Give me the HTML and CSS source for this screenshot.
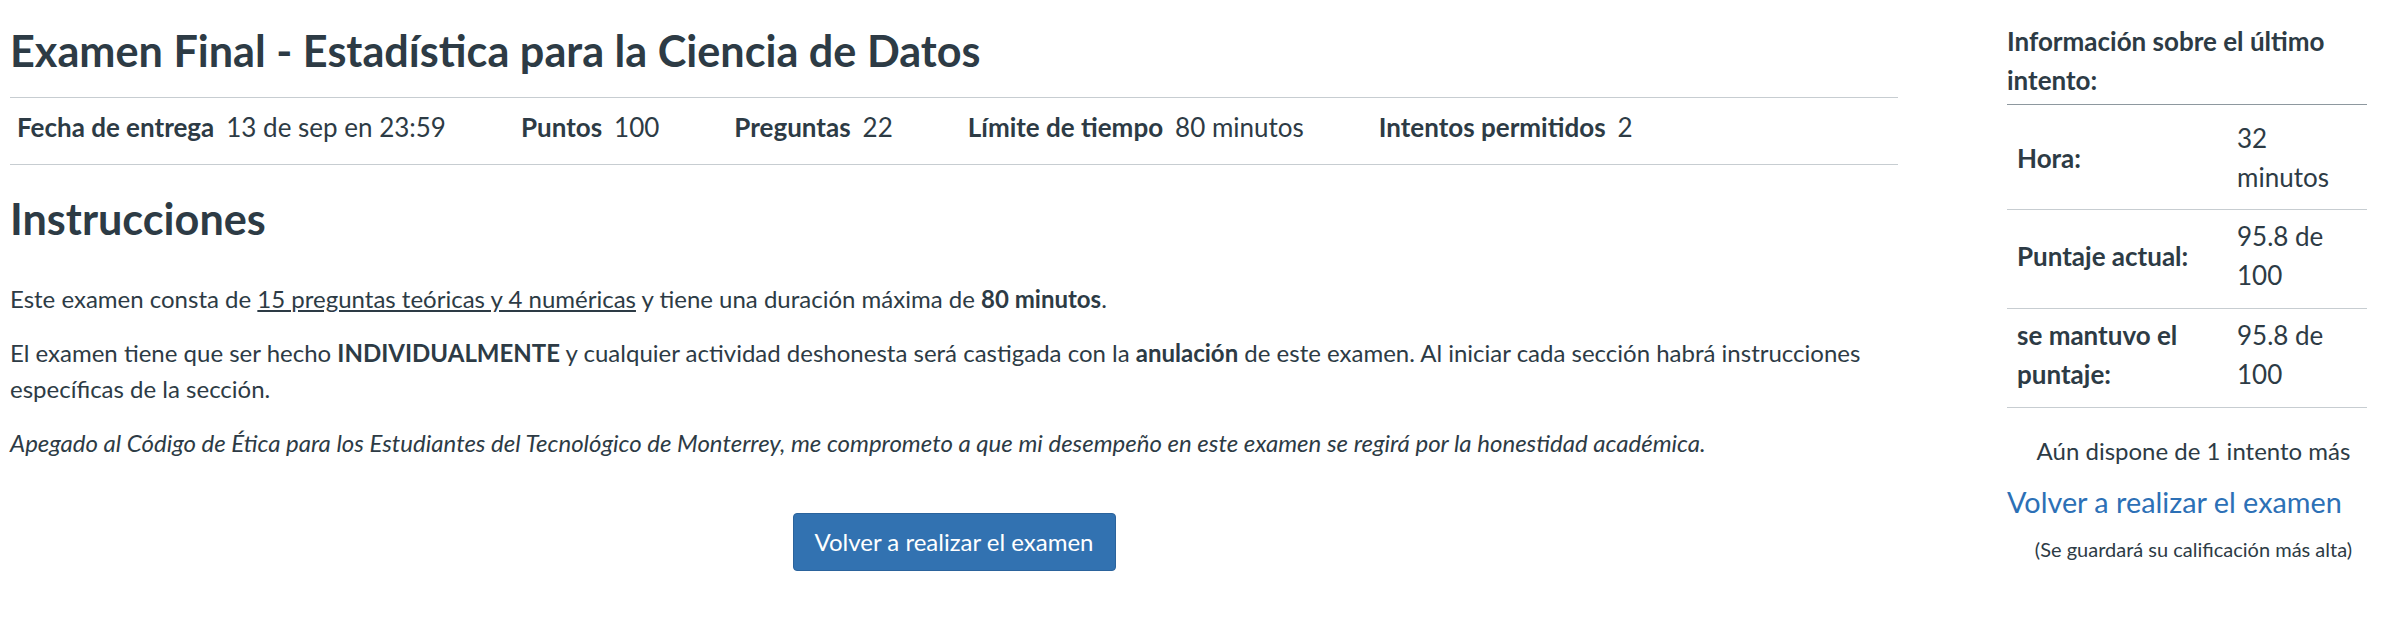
FILE: index.html
```html
<!DOCTYPE html>
<html lang="es">
<head>
<meta charset="utf-8">
<title>Examen Final - Estadística para la Ciencia de Datos</title>
<link rel="stylesheet" href="styles.css">
</head>
<body>
<div class="page">
  <main class="main">
    <h1 class="title">Examen Final - Estadística para la Ciencia de Datos</h1>
    <ul class="details">
      <li class="detail"><span class="detail-label">Fecha de entrega</span><span class="detail-value">13 de sep en 23:59</span></li>
      <li class="detail"><span class="detail-label">Puntos</span><span class="detail-value">100</span></li>
      <li class="detail"><span class="detail-label">Preguntas</span><span class="detail-value">22</span></li>
      <li class="detail"><span class="detail-label">Límite de tiempo</span><span class="detail-value">80 minutos</span></li>
      <li class="detail"><span class="detail-label">Intentos permitidos</span><span class="detail-value">2</span></li>
    </ul>
    <h2 class="section-title">Instrucciones</h2>
    <div class="description">
      <p>Este examen consta de <u>15 preguntas teóricas y 4 numéricas</u> y tiene una duración máxima de <strong>80 minutos</strong>.</p>
      <p>El examen tiene que ser hecho <strong>INDIVIDUALMENTE</strong> y cualquier actividad deshonesta será castigada con la <strong>anulación</strong> de este examen. Al iniciar cada sección habrá instrucciones específicas de la sección.</p>
      <p><em>Apegado al Código de Ética para los Estudiantes del Tecnológico de Monterrey, me comprometo a que mi desempeño en este examen se regirá por la honestidad académica.</em></p>
    </div>
    <div class="actions">
      <button class="btn-primary" type="button">Volver a realizar el examen</button>
    </div>
  </main>
  <aside class="sidebar">
    <h3 class="side-title">Información sobre el último intento:</h3>
    <table class="attempt-table">
      <tbody>
        <tr class="first-row"><th>Hora:</th><td>32 minutos</td></tr>
        <tr><th>Puntaje actual:</th><td>95.8 de 100</td></tr>
        <tr><th>se mantuvo el puntaje:</th><td>95.8 de 100</td></tr>
      </tbody>
    </table>
    <p class="remaining">Aún dispone de 1 intento más</p>
    <a class="retake-link" href="#">Volver a realizar el examen</a>
    <p class="note">(Se guardará su calificación más alta)</p>
  </aside>
</div>
</body>
</html>
```

FILE: styles.css
```css
html, body {
  margin: 0;
  padding: 0;
  background: #ffffff;
}

body {
  font-family: Lato, "Liberation Sans", sans-serif;
  color: #2d3b45;
  font-size: 24px;
  line-height: 1.5;
}

.page {
  display: flex;
  align-items: flex-start;
  padding-left: 10px;
}

.main {
  width: 1888px;
  flex: none;
}

.title {
  font-size: 43.2px;
  font-weight: 700;
  line-height: 1.2;
  margin: 25px 0 0 0;
  padding-bottom: 20px;
  border-bottom: 1px solid #c7cdd1;
}

.details {
  list-style: none;
  margin: 0;
  padding: 10px 0 17px 7px;
  display: flex;
  gap: 75px;
  font-size: 26px;
  line-height: 39px;
  border-bottom: 1px solid #c7cdd1;
}

.detail-label {
  font-weight: 700;
  margin-right: 12px;
}

.section-title {
  font-size: 43.2px;
  font-weight: 700;
  line-height: 1.2;
  margin: 28px 0 36px 0;
}

.description p {
  margin: 0 0 18px 0;
}

.actions {
  display: flex;
  justify-content: center;
  padding-top: 34px;
}

.btn-primary {
  font-family: inherit;
  font-size: 24px;
  line-height: 36px;
  color: #ffffff;
  background: #3272b1;
  border: 1px solid #2b639c;
  border-radius: 4px;
  padding: 10px 21px;
}

.sidebar {
  width: 373px;
  flex: none;
  margin-left: 109px;
}

.side-title {
  font-size: 26px;
  font-weight: 700;
  line-height: 39px;
  margin: 22px 0 0 0;
  padding-bottom: 4px;
  width: 360px;
  border-bottom: 1px solid #8e989f;
}

.attempt-table {
  width: 360px;
  border-collapse: collapse;
  font-size: 26px;
  line-height: 39px;
}

.attempt-table th,
.attempt-table td {
  text-align: left;
  vertical-align: middle;
  padding: 7px 10px 13px 10px;
  border-bottom: 1px solid #c7cdd1;
}

.attempt-table .first-row th,
.attempt-table .first-row td {
  padding-top: 14px;
  padding-bottom: 12px;
}

.attempt-table th {
  font-weight: 700;
  width: 200px;
}

.remaining {
  text-align: center;
  font-size: 24px;
  line-height: 36px;
  margin: 25px 0 0 0;
}

.retake-link {
  display: block;
  color: #2c70b6;
  text-decoration: none;
  font-size: 28.8px;
  line-height: 1.5;
  margin-top: 12px;
}

.note {
  text-align: center;
  font-size: 20px;
  line-height: 30px;
  margin: 10px 0 0 0;
}
```
